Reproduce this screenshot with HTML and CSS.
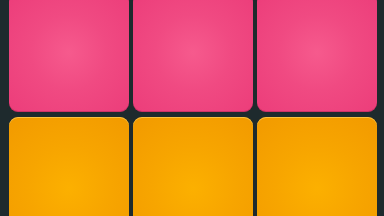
FILE: index.html
```html
<!DOCTYPE html>
<html lang="en">
<head>
  <meta charset="UTF-8" />
  <meta name="viewport" content="width=device-width, initial-scale=1.0" />
  <title>Pads</title>
  <link rel="stylesheet" href="styles.css">
</head>
<body>
  <div class="pads">
    <div class="pad pink"></div>
    <div class="pad pink"></div>
    <div class="pad pink"></div>
    <div class="pad orange"></div>
    <div class="pad orange"></div>
    <div class="pad orange"></div>
  </div>
</body>
</html>
```

FILE: styles.css
```css
html, body {
  margin: 0;
  padding: 0;
  background-color: #1e2a2d;
  overflow: hidden;
}
.pads {
  display: grid;
  grid-template-columns: 120px 120px 120px;
  grid-template-rows: 119px 119px;
  column-gap: 4px;
  row-gap: 5px;
  padding-left: 9px;
  margin-top: -7px;
}
.pad {
  border-radius: 9px;
}
.pink {
  background: radial-gradient(circle at 50% 50%, #f65a8d 0%, #f04a82 45%, #ec3d7a 100%);
  box-shadow: inset 0 -1px 0 rgba(150, 20, 60, 0.35);
}
.orange {
  background: radial-gradient(circle at 50% 60%, #fcb000 0%, #f7a500 45%, #f29a00 100%);
  box-shadow: inset 0 1px 0 rgba(255, 210, 90, 0.7);
}
```
